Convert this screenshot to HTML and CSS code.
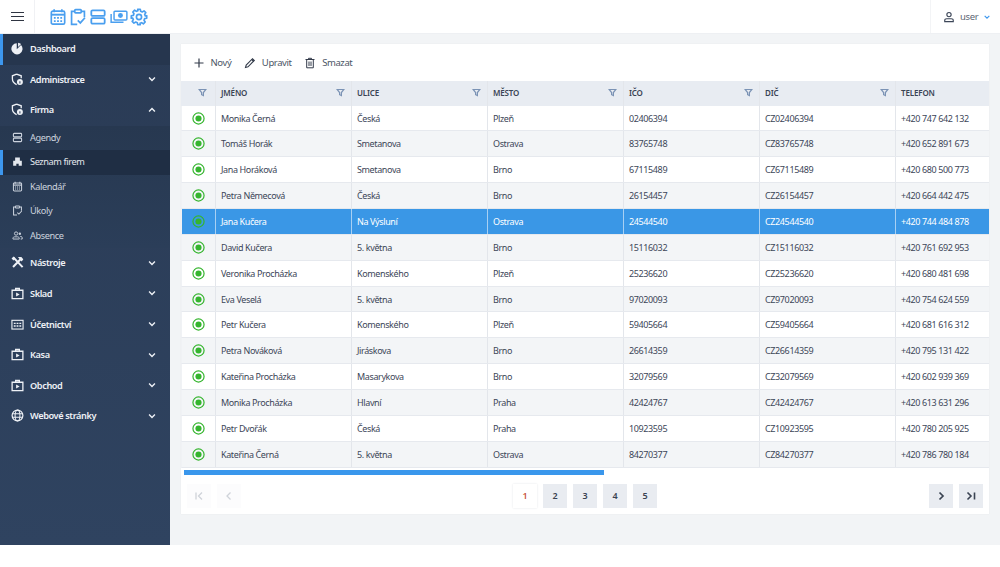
FILE: index.html
```html
<!DOCTYPE html>
<html lang="cs">
<head>
<meta charset="utf-8">
<title>Seznam firem</title>
<link rel="stylesheet" href="styles.css">
</head>
<body>
<svg class="defs" width="0" height="0" aria-hidden="true">
  <symbol id="i-status" viewBox="0 0 14 14"><circle cx="7" cy="7" r="6" fill="none" stroke="currentColor" stroke-width="1.300"/><circle cx="7" cy="7" r="3.300" fill="currentColor"/></symbol>
  <symbol id="i-filter" viewBox="0 0 12 12"><path d="M1.500 2h9L7.200 6v4.200L4.800 9V6z" fill="none" stroke="currentColor" stroke-width="1.600"/></symbol>
  <symbol id="i-down" viewBox="0 0 12 12"><path d="M2.500 4.200 6 7.700l3.500-3.500" fill="none" stroke="currentColor" stroke-width="1.700"/></symbol>
  <symbol id="i-up" viewBox="0 0 12 12"><path d="M2.500 7.800 6 4.300l3.500 3.500" fill="none" stroke="currentColor" stroke-width="1.700"/></symbol>
  <symbol id="i-shield" viewBox="0 0 14 14"><path d="M6 1.200 11 3v2.600M6 1.200 1.500 3v3.200c0 3 2 5.200 4.600 6.400" fill="none" stroke="currentColor" stroke-width="1.400"/><circle cx="9.600" cy="9.600" r="3.200" fill="currentColor"/><path d="M9.600 8.800v2.400" stroke="#2c3e5a" stroke-width="1.100"/></symbol>
  <symbol id="i-case" viewBox="0 0 14 14"><path d="M5 3.500V1.600h4v1.900M1.200 3.500h11.600v9H1.200z" fill="none" stroke="currentColor" stroke-width="1.400"/><path d="M5.500 5.800 9.300 8l-3.800 2.200z" fill="currentColor"/></symbol>
  <symbol id="i-stack" viewBox="0 0 14 14"><rect x="1.800" y="1.800" width="10.400" height="4.400" rx="1" fill="none" stroke="currentColor" stroke-width="1.400"/><rect x="1.800" y="7.800" width="10.400" height="4.400" rx="1" fill="none" stroke="currentColor" stroke-width="1.400"/></symbol>
  <symbol id="i-cal" viewBox="0 0 14 14"><rect x="1.800" y="2.400" width="10.400" height="10.200" rx="1.200" fill="none" stroke="currentColor" stroke-width="1.300"/><path d="M1.800 5.200h10.400" stroke="currentColor" stroke-width="1.500"/><path d="M4 1v2.400M10 1v2.400" stroke="currentColor" stroke-width="1.300"/><path d="M3.800 7h1.400v1.300H3.800zM6.300 7h1.400v1.300H6.300zM8.800 7h1.400v1.300H8.800zM3.800 9.600h1.400v1.300H3.800zM6.300 9.600h1.400v1.300H6.300zM8.800 9.600h1.400v1.300H8.800z" fill="currentColor"/></symbol>
  <symbol id="i-task" viewBox="0 0 14 14"><path d="M4.500 2.600H2v10.200h4.400M9.500 2.600H12v4.600" fill="none" stroke="currentColor" stroke-width="1.300"/><rect x="4.500" y="1.200" width="5" height="2.600" rx=".6" fill="none" stroke="currentColor" stroke-width="1.300"/><path d="m6.800 9.600 2 2 3.600-4" fill="none" stroke="currentColor" stroke-width="1.300"/></symbol>
  <symbol id="i-money" viewBox="0 0 16 14"><rect x="3.600" y="1.800" width="11.400" height="7.800" rx=".8" fill="none" stroke="currentColor" stroke-width="1.300"/><circle cx="9.300" cy="5.700" r="2.200" fill="currentColor"/><path d="M1 4.400v7.200h11" fill="none" stroke="currentColor" stroke-width="1.300"/></symbol>
  <symbol id="i-gear" viewBox="0 0 14 14"><circle cx="7" cy="7" r="2" fill="none" stroke="currentColor" stroke-width="1.300"/><path d="M6 1h2l.3 1.600 1.200.5 1.400-.9 1.400 1.400-.9 1.400.5 1.200L13 6v2l-1.600.3-.5 1.200.9 1.400-1.400 1.400-1.400-.9-1.200.5L8 13H6l-.3-1.600-1.200-.5-1.400.9-1.400-1.400.9-1.400-.5-1.200L1 8V6l1.600-.3.5-1.200-.9-1.400 1.400-1.400 1.400.9 1.200-.5z" fill="none" stroke="currentColor" stroke-width="1.300" stroke-linejoin="round"/></symbol>
  <symbol id="i-user" viewBox="0 0 14 14"><circle cx="7" cy="4.200" r="2.500" fill="none" stroke="currentColor" stroke-width="1.300"/><path d="M2 12.400v-1.200c0-1.300 1.200-2.200 2.500-2.200h5c1.300 0 2.500.9 2.500 2.200v1.200z" fill="none" stroke="currentColor" stroke-width="1.300"/></symbol>
  <symbol id="i-pie" viewBox="0 0 14 14"><path d="M6.200 1.300v6.500l4.600-4.600A6 6 0 1 1 6.200 1.300z" fill="currentColor"/><path d="M7.600.8a6 6 0 0 1 3.300 1.400L7.600 5.500z" fill="currentColor"/></symbol>
  <symbol id="i-firm" viewBox="0 0 14 14"><path d="M1.500 12.500V6H4V2h6v4h2.500v6.500H8.500V10h-3v2.500z" fill="currentColor"/></symbol>
  <symbol id="i-people" viewBox="0 0 14 14"><circle cx="5.200" cy="4.500" r="2.100" fill="none" stroke="currentColor" stroke-width="1.200"/><circle cx="10" cy="4.800" r="1.500" fill="currentColor"/><path d="M1.200 11.500v-1c0-1 1-1.800 2-1.800h4c1 0 2 .8 2 1.800v1zM10.500 8.300h1c1 0 1.500.8 1.500 1.600v1.600h-2" fill="none" stroke="currentColor" stroke-width="1.200"/></symbol>
  <symbol id="i-tools" viewBox="0 0 14 14"><path d="M2.500 1.500 12.500 12M11.800 1.800 2.200 11.800" stroke="currentColor" stroke-width="2.200" fill="none"/><path d="M7.500 1h3l2.800 2.800-2 2zM.6 2.800 2.800.6l2 2L2.600 4.800z" fill="currentColor"/></symbol>
  <symbol id="i-ledger" viewBox="0 0 14 14"><rect x="1" y="2.500" width="12" height="9.400" fill="none" stroke="currentColor" stroke-width="1.200"/><path d="M3 5h2v1.500H3zM6 5h2v1.500H6zM9 5h2v1.500H9zM3 7.800h2v1.500H3zM6 7.800h2v1.500H6zM9 7.800h2v1.500H9z" fill="currentColor"/></symbol>
  <symbol id="i-globe" viewBox="0 0 14 14"><circle cx="7" cy="7" r="5.800" fill="none" stroke="currentColor" stroke-width="1.300"/><ellipse cx="7" cy="7" rx="2.600" ry="5.800" fill="none" stroke="currentColor" stroke-width="1.100"/><path d="M1.500 5h11M1.500 9h11" stroke="currentColor" stroke-width="1.100"/></symbol>
</svg>

<header class="topbar">
  <div class="burger-cell"><span class="burger"><i></i><i></i><i></i></span></div>
  <nav class="quick">
    <svg class="qi"><use href="#i-cal"/></svg>
    <svg class="qi"><use href="#i-task"/></svg>
    <svg class="qi"><use href="#i-stack"/></svg>
    <svg class="qi"><use href="#i-money"/></svg>
    <svg class="qi"><use href="#i-gear"/></svg>
  </nav>
  <div class="user">
    <svg class="user-icon"><use href="#i-user"/></svg>
    <span>user</span>
    <svg class="user-caret"><use href="#i-down"/></svg>
  </div>
</header>

<div class="shell">
  <aside class="sidebar">
    <a class="nav nav-dash"><svg class="ni"><use href="#i-pie"/></svg><span>Dashboard</span></a>
    <a class="nav"><svg class="ni"><use href="#i-shield"/></svg><span>Administrace</span><svg class="caret"><use href="#i-down"/></svg></a>
    <a class="nav"><svg class="ni"><use href="#i-shield"/></svg><span>Firma</span><svg class="caret"><use href="#i-up"/></svg></a>
    <div class="submenu">
      <a class="sub"><svg class="si"><use href="#i-stack"/></svg><span>Agendy</span></a>
      <a class="sub sub-active"><svg class="si"><use href="#i-firm"/></svg><span>Seznam firem</span></a>
      <a class="sub"><svg class="si"><use href="#i-cal"/></svg><span>Kalendář</span></a>
      <a class="sub"><svg class="si"><use href="#i-task"/></svg><span>Úkoly</span></a>
      <a class="sub"><svg class="si"><use href="#i-people"/></svg><span>Absence</span></a>
    </div>
    <a class="nav"><svg class="ni"><use href="#i-tools"/></svg><span>Nástroje</span><svg class="caret"><use href="#i-down"/></svg></a>
    <a class="nav"><svg class="ni"><use href="#i-case"/></svg><span>Sklad</span><svg class="caret"><use href="#i-down"/></svg></a>
    <a class="nav"><svg class="ni"><use href="#i-ledger"/></svg><span>Účetnictví</span><svg class="caret"><use href="#i-down"/></svg></a>
    <a class="nav"><svg class="ni"><use href="#i-case"/></svg><span>Kasa</span><svg class="caret"><use href="#i-down"/></svg></a>
    <a class="nav"><svg class="ni"><use href="#i-case"/></svg><span>Obchod</span><svg class="caret"><use href="#i-down"/></svg></a>
    <a class="nav"><svg class="ni"><use href="#i-globe"/></svg><span>Webové stránky</span><svg class="caret"><use href="#i-down"/></svg></a>
  </aside>

  <main class="main">
    <section class="card">
      <div class="toolbar">
        <button class="tool"><svg class="ti" viewBox="0 0 12 12"><path d="M6 1.500v9M1.500 6h9" stroke="currentColor" stroke-width="1.200" fill="none"/></svg>Nový</button>
        <button class="tool"><svg class="ti" viewBox="0 0 12 12"><path d="M1.500 10.500 2.200 8 8.500 1.700l1.800 1.800L4 9.800z" fill="none" stroke="currentColor" stroke-width="1.100"/><path d="m7.800 2.400 1.800 1.800" stroke="currentColor" stroke-width="1.400"/></svg>Upravit</button>
        <button class="tool"><svg class="ti" viewBox="0 0 12 12"><path d="M1.500 2.500h9M4.500 2.500V1.300h3v1.200M2.700 2.500v8.300h6.600V2.500M5 4.500v4.500M7 4.500v4.500" fill="none" stroke="currentColor" stroke-width="1"/></svg>Smazat</button>
      </div>

      <div class="grid">
        <div class="row head">
          <div class="c c-icon"><svg class="filter"><use href="#i-filter"/></svg></div>
          <div class="c">JMÉNO<svg class="filter"><use href="#i-filter"/></svg></div>
          <div class="c">ULICE<svg class="filter"><use href="#i-filter"/></svg></div>
          <div class="c">MĚSTO<svg class="filter"><use href="#i-filter"/></svg></div>
          <div class="c">IČO<svg class="filter"><use href="#i-filter"/></svg></div>
          <div class="c">DIČ<svg class="filter"><use href="#i-filter"/></svg></div>
          <div class="c">TELEFON</div>
        </div>
        <div class="row"><div class="c c-icon"><svg class="st"><use href="#i-status"/></svg></div><div class="c">Monika Černá</div><div class="c">Česká</div><div class="c">Plzeň</div><div class="c">02406394</div><div class="c">CZ02406394</div><div class="c">+420 747 642 132</div></div>
        <div class="row alt"><div class="c c-icon"><svg class="st"><use href="#i-status"/></svg></div><div class="c">Tomáš Horák</div><div class="c">Smetanova</div><div class="c">Ostrava</div><div class="c">83765748</div><div class="c">CZ83765748</div><div class="c">+420 652 891 673</div></div>
        <div class="row"><div class="c c-icon"><svg class="st"><use href="#i-status"/></svg></div><div class="c">Jana Horáková</div><div class="c">Smetanova</div><div class="c">Brno</div><div class="c">67115489</div><div class="c">CZ67115489</div><div class="c">+420 680 500 773</div></div>
        <div class="row alt"><div class="c c-icon"><svg class="st"><use href="#i-status"/></svg></div><div class="c">Petra Němecová</div><div class="c">Česká</div><div class="c">Brno</div><div class="c">26154457</div><div class="c">CZ26154457</div><div class="c">+420 664 442 475</div></div>
        <div class="row selected"><div class="c c-icon"><svg class="st"><use href="#i-status"/></svg></div><div class="c">Jana Kučera</div><div class="c">Na Výsluní</div><div class="c">Ostrava</div><div class="c">24544540</div><div class="c">CZ24544540</div><div class="c">+420 744 484 878</div></div>
        <div class="row alt"><div class="c c-icon"><svg class="st"><use href="#i-status"/></svg></div><div class="c">David Kučera</div><div class="c">5. května</div><div class="c">Brno</div><div class="c">15116032</div><div class="c">CZ15116032</div><div class="c">+420 761 692 953</div></div>
        <div class="row"><div class="c c-icon"><svg class="st"><use href="#i-status"/></svg></div><div class="c">Veronika Procházka</div><div class="c">Komenského</div><div class="c">Plzeň</div><div class="c">25236620</div><div class="c">CZ25236620</div><div class="c">+420 680 481 698</div></div>
        <div class="row alt"><div class="c c-icon"><svg class="st"><use href="#i-status"/></svg></div><div class="c">Eva Veselá</div><div class="c">5. května</div><div class="c">Brno</div><div class="c">97020093</div><div class="c">CZ97020093</div><div class="c">+420 754 624 559</div></div>
        <div class="row"><div class="c c-icon"><svg class="st"><use href="#i-status"/></svg></div><div class="c">Petr Kučera</div><div class="c">Komenského</div><div class="c">Plzeň</div><div class="c">59405664</div><div class="c">CZ59405664</div><div class="c">+420 681 616 312</div></div>
        <div class="row alt"><div class="c c-icon"><svg class="st"><use href="#i-status"/></svg></div><div class="c">Petra Nováková</div><div class="c">Jiráskova</div><div class="c">Brno</div><div class="c">26614359</div><div class="c">CZ26614359</div><div class="c">+420 795 131 422</div></div>
        <div class="row"><div class="c c-icon"><svg class="st"><use href="#i-status"/></svg></div><div class="c">Kateřina Procházka</div><div class="c">Masarykova</div><div class="c">Brno</div><div class="c">32079569</div><div class="c">CZ32079569</div><div class="c">+420 602 939 369</div></div>
        <div class="row alt"><div class="c c-icon"><svg class="st"><use href="#i-status"/></svg></div><div class="c">Monika Procházka</div><div class="c">Hlavní</div><div class="c">Praha</div><div class="c">42424767</div><div class="c">CZ42424767</div><div class="c">+420 613 631 296</div></div>
        <div class="row"><div class="c c-icon"><svg class="st"><use href="#i-status"/></svg></div><div class="c">Petr Dvořák</div><div class="c">Česká</div><div class="c">Praha</div><div class="c">10923595</div><div class="c">CZ10923595</div><div class="c">+420 780 205 925</div></div>
        <div class="row alt"><div class="c c-icon"><svg class="st"><use href="#i-status"/></svg></div><div class="c">Kateřina Černá</div><div class="c">5. května</div><div class="c">Ostrava</div><div class="c">84270377</div><div class="c">CZ84270377</div><div class="c">+420 786 780 184</div></div>
      </div>

      <div class="scrolltrack"><div class="scrollthumb"></div></div>

      <div class="pager">
        <div class="pg-group">
          <button class="pg pg-off"><svg class="pi" viewBox="0 0 12 12"><path d="M3 2.500v7M9 2.500 5.500 6 9 9.500" fill="none" stroke="currentColor" stroke-width="1.300"/></svg></button>
          <button class="pg pg-off"><svg class="pi" viewBox="0 0 12 12"><path d="M7.500 2.500 4 6l3.500 3.500" fill="none" stroke="currentColor" stroke-width="1.300"/></svg></button>
        </div>
        <div class="pg-pages">
          <button class="pg pg-cur">1</button>
          <button class="pg">2</button>
          <button class="pg">3</button>
          <button class="pg">4</button>
          <button class="pg">5</button>
        </div>
        <div class="pg-group">
          <button class="pg"><svg class="pi" viewBox="0 0 12 12"><path d="M4.500 2.500 8 6 4.500 9.500" fill="none" stroke="currentColor" stroke-width="1.700"/></svg></button>
          <button class="pg"><svg class="pi" viewBox="0 0 12 12"><path d="M9.500 2.500v7M2.500 2.500 6 6 2.500 9.500" fill="none" stroke="currentColor" stroke-width="1.600"/></svg></button>
        </div>
      </div>
    </section>
  </main>
</div>
</body>
</html>
```
FILE: styles.css
```css
* { box-sizing: border-box; }
html, body { margin: 0; padding: 0; height: 100%; background: #fff; overflow: hidden; }
body { font-family: "Noto Sans", "Open Sans", sans-serif; font-size: 9px; letter-spacing: -.38px; color: #3c4658; }
.defs { position: absolute; }
svg { display: block; flex: none; }

.topbar { display: flex; align-items: center; height: 34px; background: #fff; border-bottom: 1px solid #eef0f3; }
.burger-cell { width: 35px; height: 33px; display: flex; align-items: center; justify-content: center; border-right: 1px solid #f0f1f4; }
.burger { display: flex; flex-direction: column; gap: 2.500px; width: 13px; }
.burger i { display: block; height: 1.500px; background: #2f3542; }
.quick { display: flex; align-items: center; gap: 2.400px; padding-left: 13.500px; color: #4a9fef; }
.qi { width: 18px; height: 18px; }
.user { margin-left: auto; height: 33px; width: 70px; display: flex; align-items: center; padding-left: 12px; gap: 5px; border-left: 1px solid #f3f4f6; color: #5d6675; font-size: 9.500px; }
.user-icon { width: 12px; height: 12px; color: #3c4658; }
.user-caret { width: 8px; height: 8px; color: #3d97ee; }

.shell { display: flex; height: 511px; }
.sidebar { width: 170px; background: linear-gradient(#2a3b55, #2f4360); color: #eef1f6; }
.nav { display: flex; align-items: center; height: 30.600px; padding: 0 13px 1.500px 11px; font-size: 9.200px; letter-spacing: -.4px; font-weight: 600; gap: 6px; }
.nav span { flex: 1; }
.nav-dash { background: #26364e; border-left: 3px solid #3d97ee; padding-left: 8px; }
.ni { width: 13px; height: 13px; }
.caret { width: 10px; height: 10px; }
.submenu { background: linear-gradient(#273850, #2b3e59); }
.sub { display: flex; align-items: center; height: 24.500px; padding: 0 0 1.500px 12px; gap: 7px; font-size: 9.200px; letter-spacing: -.4px; color: #ccd3de; }
.sub-active { background: #1f2e44; border-left: 3px solid #3d97ee; padding-left: 9px; color: #e4e8ee; }
.si { width: 11px; height: 11px; }

.main { flex: 1; background: #f2f4f6; padding: 10px 11px 0; }
.card { background: #fff; height: 470px; box-shadow: 0 0 1px #dfe2e7; display: flex; flex-direction: column; }
.toolbar { height: 37px; display: flex; align-items: center; padding-left: 11.500px; gap: 12.500px; }
.tool { display: flex; align-items: center; gap: 6px; background: none; border: 0; padding: 0; font: inherit; font-size: 9.500px; letter-spacing: -.4px; color: #4b5566; }
.ti { width: 12px; height: 12px; color: #333b4a; }

.grid { display: flex; flex-direction: column; }
.row { display: grid; grid-template-columns: 34px repeat(5, 136px) 1fr; height: 25.870px; background: #fff; border-bottom: 1px solid #e6e9ee; border-left: 1px solid #f0f2f5; }
.row.alt { background: #f3f5f7; }
.row.head { height: 24.600px; background: #e8ecf2; border-bottom: 0; border-left-color: #e8ecf2; font-size: 8px; font-weight: 600; letter-spacing: -.15px; color: #3a4455; }
.row.selected { background: #3a97e6; color: #fff; }
.c { display: flex; align-items: center; justify-content: space-between; padding: 0 6px 0 5px; border-right: 1px solid #e3e6eb; white-space: nowrap; min-width: 0; }
.c:last-child { border-right: 0; }
.c-icon { justify-content: center; padding: 0; }
.head .c { padding-bottom: 1.500px; }
.head .c-icon { justify-content: flex-end; padding-right: 8px; }
.row.selected .c { border-right-color: #a8d0f3; }
.filter { width: 9px; height: 9px; color: #7b93b5; }
.st { width: 13px; height: 13px; color: #35b52e; }

.scrolltrack { padding: 2.400px 3px 0; height: 7.400px; }
.scrollthumb { width: 420px; height: 5px; background: #3a97ec; }

.pager { flex: 1; display: flex; align-items: center; justify-content: space-between; padding: 2px 6px 0 6px; }
.pg-group { display: flex; gap: 6px; }
.pg-pages { display: flex; gap: 6px; }
.pg { width: 24px; height: 24px; display: flex; align-items: center; justify-content: center; background: #e9ecf1; border: 0; padding: 0; font: inherit; font-size: 9px; font-weight: 600; color: #3a4352; }
.pg-off { background: #fcfcfd; color: #cfd3d9; }
.pg-cur { background: #fff; color: #c8553d; box-shadow: 0 0 2px #e3e5e9; }
.pi { width: 12px; height: 12px; }
```
